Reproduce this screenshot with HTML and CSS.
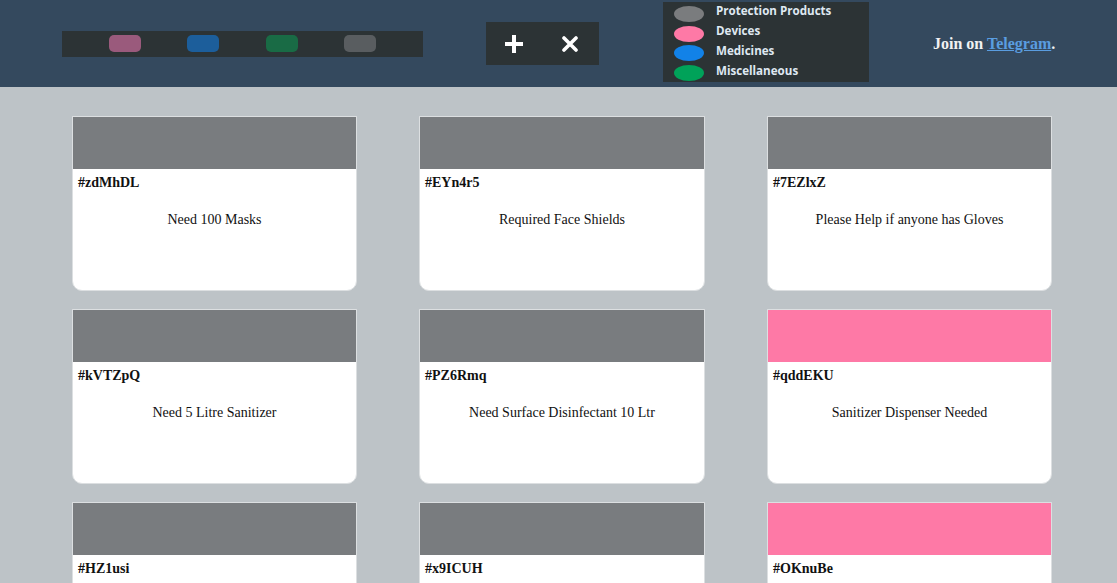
FILE: index.html
```html
<!DOCTYPE html>
<html>
<head>
<meta charset="utf-8">
<link rel="stylesheet" href="styles.css">
</head>
<body>
<header class="topbar">
  <div class="filters">
    <span class="pill pill-pink"></span>
    <span class="pill pill-blue"></span>
    <span class="pill pill-green"></span>
    <span class="pill pill-gray"></span>
  </div>
  <div class="actions">
    <svg class="icon-plus" width="20" height="20" viewBox="0 0 20 20"><path d="M10 1v18M1 10h18" stroke="#fff" stroke-width="4" stroke-linecap="butt"/></svg>
    <svg class="icon-x" width="16" height="16" viewBox="0 0 16 16"><path d="M2 2l12 12M14 2L2 14" stroke="#fff" stroke-width="3.6" stroke-linecap="round"/></svg>
  </div>
  <div class="legend">
    <div class="legend-row"><span class="dot dot-gray"></span><span class="legend-label">Protection Products</span></div>
    <div class="legend-row"><span class="dot dot-pink"></span><span class="legend-label">Devices</span></div>
    <div class="legend-row"><span class="dot dot-blue"></span><span class="legend-label">Medicines</span></div>
    <div class="legend-row"><span class="dot dot-green"></span><span class="legend-label">Miscellaneous</span></div>
  </div>
  <div class="join">Join on <a href="#" class="tg">Telegram</a>.</div>
</header>
<main class="grid">
  <div class="card"><div class="band band-gray"></div><div class="card-id">#zdMhDL</div><div class="card-msg">Need 100 Masks</div></div>
  <div class="card"><div class="band band-gray"></div><div class="card-id">#EYn4r5</div><div class="card-msg">Required Face Shields</div></div>
  <div class="card"><div class="band band-gray"></div><div class="card-id">#7EZlxZ</div><div class="card-msg">Please Help if anyone has Gloves</div></div>
  <div class="card"><div class="band band-gray"></div><div class="card-id">#kVTZpQ</div><div class="card-msg">Need 5 Litre Sanitizer</div></div>
  <div class="card"><div class="band band-gray"></div><div class="card-id">#PZ6Rmq</div><div class="card-msg">Need Surface Disinfectant 10 Ltr</div></div>
  <div class="card"><div class="band band-pink"></div><div class="card-id">#qddEKU</div><div class="card-msg">Sanitizer Dispenser Needed</div></div>
  <div class="card"><div class="band band-gray"></div><div class="card-id">#HZ1usi</div><div class="card-msg">Need Hand Gloves</div></div>
  <div class="card"><div class="band band-gray"></div><div class="card-id">#x9ICUH</div><div class="card-msg">Need N95 Masks</div></div>
  <div class="card"><div class="band band-pink"></div><div class="card-id">#OKnuBe</div><div class="card-msg">Thermometer Needed</div></div>
</main>
</body>
</html>
```
FILE: styles.css
```css
html, body {
  margin: 0;
  padding: 0;
}
body {
  background: #bdc3c7;
  font-family: "Liberation Serif", "Times New Roman", serif;
  overflow: hidden;
}
.topbar {
  height: 87px;
  background: #34495e;
  display: flex;
  align-items: center;
  padding-left: 62px;
  gap: 64px;
}
.filters {
  width: 361px;
  height: 26px;
  background: #2c3335;
  display: flex;
  align-items: center;
  justify-content: space-evenly;
  margin-right: -1px;
}
.pill {
  width: 32px;
  height: 17px;
  border-radius: 5px;
}
.pill-pink { background: #9a5a7c; }
.pill-blue { background: #1c5e9b; }
.pill-green { background: #196b45; }
.pill-gray { background: #595d60; }
.actions {
  width: 113px;
  height: 43px;
  background: #2c3335;
  display: flex;
  align-items: center;
  box-sizing: border-box;
  padding-left: 18px;
  gap: 38px;
}
.legend {
  width: 206px;
  height: 80px;
  background: #2c3335;
  box-sizing: border-box;
  padding: 1px 0 0 11px;
  display: flex;
  flex-direction: column;
  margin-top: -4px;
}
.legend-row {
  height: 20.5px;
  display: flex;
  align-items: center;
  gap: 12px;
}
.dot {
  width: 30px;
  height: 16px;
  border-radius: 50%;
  margin-top: 3px;
}
.dot-gray { background: #7a7c7e; }
.dot-pink { background: #fe79a6; }
.dot-blue { background: #1282e8; }
.dot-green { background: #00a259; }
.legend-label {
  font-family: "Open Sans", "Liberation Sans", sans-serif;
  font-weight: 700;
  font-size: 11.6px;
  color: #dfe8f2;
  margin-top: -3px;
}
.join {
  font-weight: 700;
  font-size: 16px;
  color: #f2f2f2;
}
.tg {
  color: #5a9de0;
}
.grid {
  display: grid;
  grid-template-columns: 285px 286px 285px;
  column-gap: 62px;
  row-gap: 18px;
  padding: 29px 0 0 72px;
}
.card {
  height: 175px;
  box-sizing: border-box;
  border: 1px solid #dcdfe1;
  border-radius: 0 0 10px 10px;
  background: #fff;
  overflow: hidden;
}
.band {
  height: 52px;
}
.band-gray { background: #797c7f; }
.band-pink { background: #fe79a6; }
.card-id {
  font-weight: 700;
  font-size: 14px;
  line-height: 16px;
  padding: 6px 5px 0;
  color: #111;
}
.card-msg {
  font-size: 14px;
  line-height: 16px;
  text-align: center;
  margin-top: 21px;
  color: #111;
}
```
